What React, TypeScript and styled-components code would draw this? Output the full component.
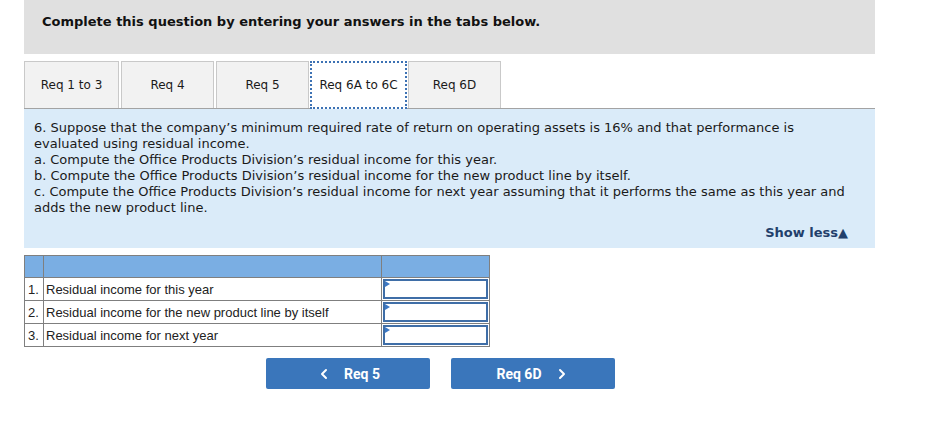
import styled, { createGlobalStyle } from "styled-components";
import { ChevronLeft, ChevronRight } from "lucide-react";

const GlobalStyle = createGlobalStyle`
  body {
    margin: 0;
    background: #fff;
    font-family: "DejaVu Sans", Verdana, sans-serif;
    color: #111;
  }
`;

const Page = styled.div`
  width: 851px;
  margin-left: 24px;
`;

const Header = styled.div`
  height: 54px;
  background: #e0e0e0;
  padding: 14px 0 0 18px;
  box-sizing: border-box;
  font-size: 13px;
  font-weight: bold;
`;

const TabBar = styled.div`
  margin-top: 7px;
  display: flex;
  align-items: flex-end;
  border-bottom: 1px solid #a3a3a3;
`;

const Tab = styled.div<{ $active?: boolean; $w: number }>`
  width: ${(p) => p.$w}px;
  box-sizing: border-box;
  display: flex;
  align-items: center;
  justify-content: center;
  font-size: 12px;
  color: #1a1a1a;
  background: ${(p) => (p.$active ? "#fff" : "#f2f2f2")};
  border: ${(p) => (p.$active ? "2px dotted #3d72b4" : "1px solid #c9c9c9")};
  border-bottom: ${(p) => (p.$active ? "2px dotted #3d72b4" : "none")};
  margin-right: ${(p) => (p.$active ? "1px" : "2px")};
  margin-left: ${(p) => (p.$active ? "-1px" : "0")};
  margin-bottom: ${(p) => (p.$active ? "-1px" : "0")};
  height: ${(p) => (p.$active ? "48px" : "47px")};
`;

const Panel = styled.div`
  background: #daebf9;
  padding: 11px 27px 7px 10px;
  font-size: 13px;
  line-height: 16px;
  color: #1a1a1a;
`;

const QuestionLine = styled.div``;

const ShowLess = styled.div`
  margin-top: 9px;
  text-align: right;
  font-weight: bold;
  color: #223f6b;
  font-size: 13px;
`;

const Table = styled.table`
  margin-top: 7px;
  border-collapse: collapse;
  width: 466px;
  font-family: "Liberation Sans", Arial, sans-serif;
  font-size: 13px;
  line-height: 15px;
  color: #222;

  td {
    border: 1px solid #7f7f7f;
    height: 22px;
    box-sizing: border-box;
  }
`;

const HeadCell = styled.td`
  background: #7aaee3;
  padding: 0;
`;

const NumCell = styled.td`
  width: 19px;
  padding: 0 0 0 3px;
  text-align: left;
`;

const LabelCell = styled.td`
  padding: 0 0 0 2px;
`;

const InputCell = styled.td`
  width: 108px;
  padding: 1px;
`;

const InputBox = styled.div`
  position: relative;
  height: 20px;
  box-sizing: border-box;
  border: 2px solid #3f6ea7;
  background: #fff;
`;

const Marker = styled.span`
  position: absolute;
  left: 0;
  top: 0;
  width: 0;
  height: 0;
  border-top: 3px solid transparent;
  border-bottom: 3px solid transparent;
  border-left: 5px solid #3c78c4;
`;

const Buttons = styled.div`
  display: flex;
  gap: 21px;
  margin: 11px 0 0 242px;
`;

const NavButton = styled.div`
  width: 164px;
  height: 31px;
  border-radius: 2px;
  background: #3a76bb;
  color: #fff;
  display: flex;
  align-items: center;
  justify-content: center;
  gap: 12px;
  font-family: Roboto, "Liberation Sans", Arial, sans-serif;
  font-weight: bold;
  font-size: 14px;
`;

const tabs = [
  { label: "Req 1 to 3", w: 95 },
  { label: "Req 4", w: 93 },
  { label: "Req 5", w: 93 },
  { label: "Req 6A to 6C", w: 97, active: true },
  { label: "Req 6D", w: 93 },
];

const rows = [
  "Residual income for this year",
  "Residual income for the new product line by itself",
  "Residual income for next year",
];

export default function App() {
  return (
    <>
      <GlobalStyle />
      <Page>
        <Header>Complete this question by entering your answers in the tabs below.</Header>
        <TabBar>
          {tabs.map((t) => (
            <Tab key={t.label} $w={t.w} $active={t.active}>
              {t.label}
            </Tab>
          ))}
        </TabBar>
        <Panel>
          <QuestionLine>
            6. Suppose that the company’s minimum required rate of return on operating assets is 16% and that performance is
            evaluated using residual income.
          </QuestionLine>
          <QuestionLine>a. Compute the Office Products Division’s residual income for this year.</QuestionLine>
          <QuestionLine>b. Compute the Office Products Division’s residual income for the new product line by itself.</QuestionLine>
          <QuestionLine>
            c. Compute the Office Products Division’s residual income for next year assuming that it performs the same as this year and
            adds the new product line.
          </QuestionLine>
          <ShowLess>Show less▲</ShowLess>
        </Panel>
        <Table>
          <tbody>
            <tr>
              <HeadCell />
              <HeadCell />
              <HeadCell />
            </tr>
            {rows.map((r, i) => (
              <tr key={r}>
                <NumCell>{i + 1}.</NumCell>
                <LabelCell>{r}</LabelCell>
                <InputCell>
                  <InputBox>
                    <Marker />
                  </InputBox>
                </InputCell>
              </tr>
            ))}
          </tbody>
        </Table>
        <Buttons>
          <NavButton>
            <ChevronLeft size={16} strokeWidth={3} />
            Req 5
          </NavButton>
          <NavButton>
            Req 6D
            <ChevronRight size={16} strokeWidth={3} />
          </NavButton>
        </Buttons>
      </Page>
    </>
  );
}
